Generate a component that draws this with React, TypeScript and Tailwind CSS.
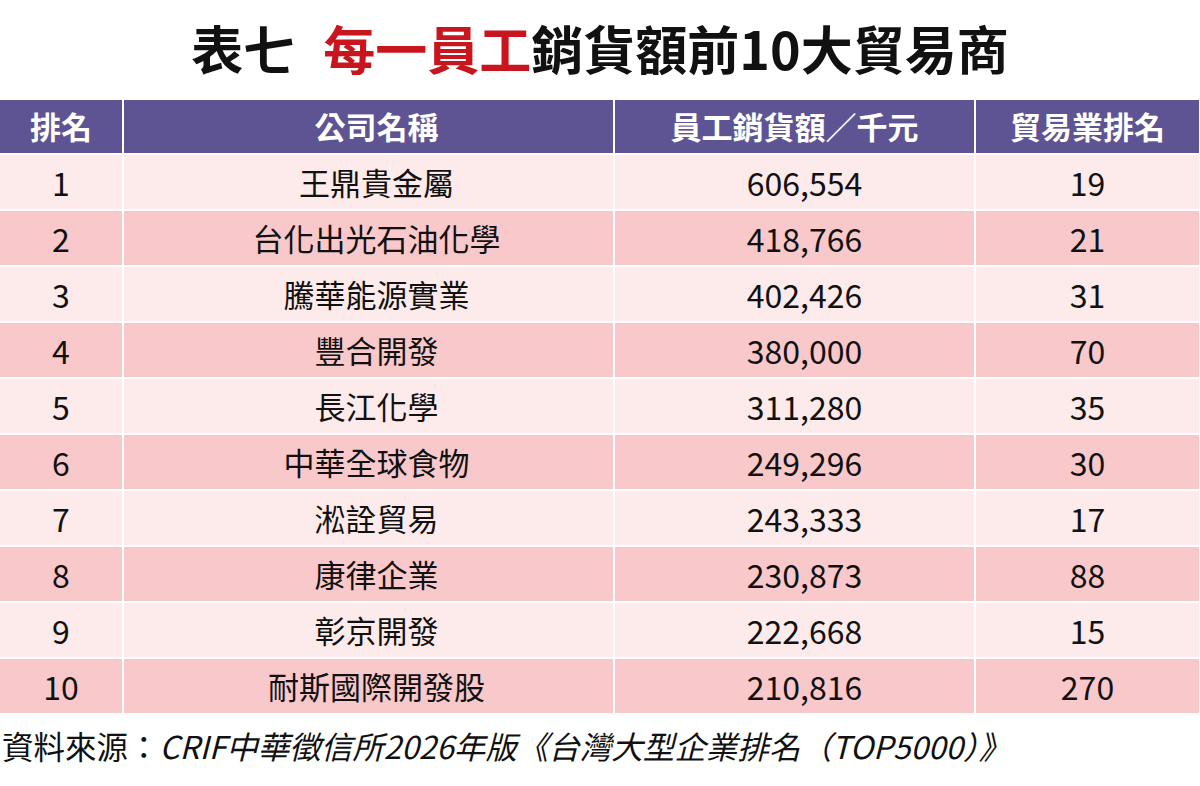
const rows = [
  { rank: "1", name: "王鼎貴金屬", sales: "606,554", tradeRank: "19" },
  { rank: "2", name: "台化出光石油化學", sales: "418,766", tradeRank: "21" },
  { rank: "3", name: "騰華能源實業", sales: "402,426", tradeRank: "31" },
  { rank: "4", name: "豐合開發", sales: "380,000", tradeRank: "70" },
  { rank: "5", name: "長江化學", sales: "311,280", tradeRank: "35" },
  { rank: "6", name: "中華全球食物", sales: "249,296", tradeRank: "30" },
  { rank: "7", name: "淞詮貿易", sales: "243,333", tradeRank: "17" },
  { rank: "8", name: "康律企業", sales: "230,873", tradeRank: "88" },
  { rank: "9", name: "彰京開發", sales: "222,668", tradeRank: "15" },
  { rank: "10", name: "耐斯國際開發股", sales: "210,816", tradeRank: "270" },
];

const cols = "grid grid-cols-[122px_489px_359px_223px] gap-x-[2px]";

export default function App() {
  return (
    <div className="w-[1200px] h-[786px] bg-white text-[#111] font-['Noto_Sans_CJK_TC',sans-serif] overflow-hidden">
      <h1 className="h-[100px] pb-1 flex items-center justify-center text-[52px] font-bold leading-none">
        表七
        <span className="ml-[28px] text-[#c9161e]">每一員工</span>
        銷貨額前10大貿易商
      </h1>

      <div className="w-[1199px] flex flex-col gap-y-[2px]">
        <div className={`${cols} h-[53px] text-white font-bold text-[31px]`}>
          <div className="bg-[#5e5494] flex items-center justify-center">排名</div>
          <div className="bg-[#5e5494] flex items-center justify-center pl-4">公司名稱</div>
          <div className="bg-[#5e5494] flex items-center justify-center">員工銷貨額／千元</div>
          <div className="bg-[#5e5494] flex items-center justify-center">貿易業排名</div>
        </div>

        {rows.map((r, i) => {
          const bg = i % 2 === 0 ? "bg-[#fdeaea]" : "bg-[#f8c8cb]";
          return (
            <div key={r.rank} className={`${cols} h-[54px] text-[31px]`}>
              <div className={`${bg} flex items-center justify-center text-[32px]`}>{r.rank}</div>
              <div className={`${bg} flex items-center justify-center pl-4`}>{r.name}</div>
              <div className={`${bg} flex items-center justify-center pl-5 text-[32px]`}>{r.sales}</div>
              <div className={`${bg} flex items-center justify-center text-[32px]`}>{r.tradeRank}</div>
            </div>
          );
        })}
      </div>

      <p className="pt-[13px] pl-[2px] text-[31.5px] leading-[38px] whitespace-nowrap">
        資料來源：<span className="italic">CRIF中華徵信所2026年版《台灣大型企業排名（TOP5000）》</span>
      </p>
    </div>
  );
}
